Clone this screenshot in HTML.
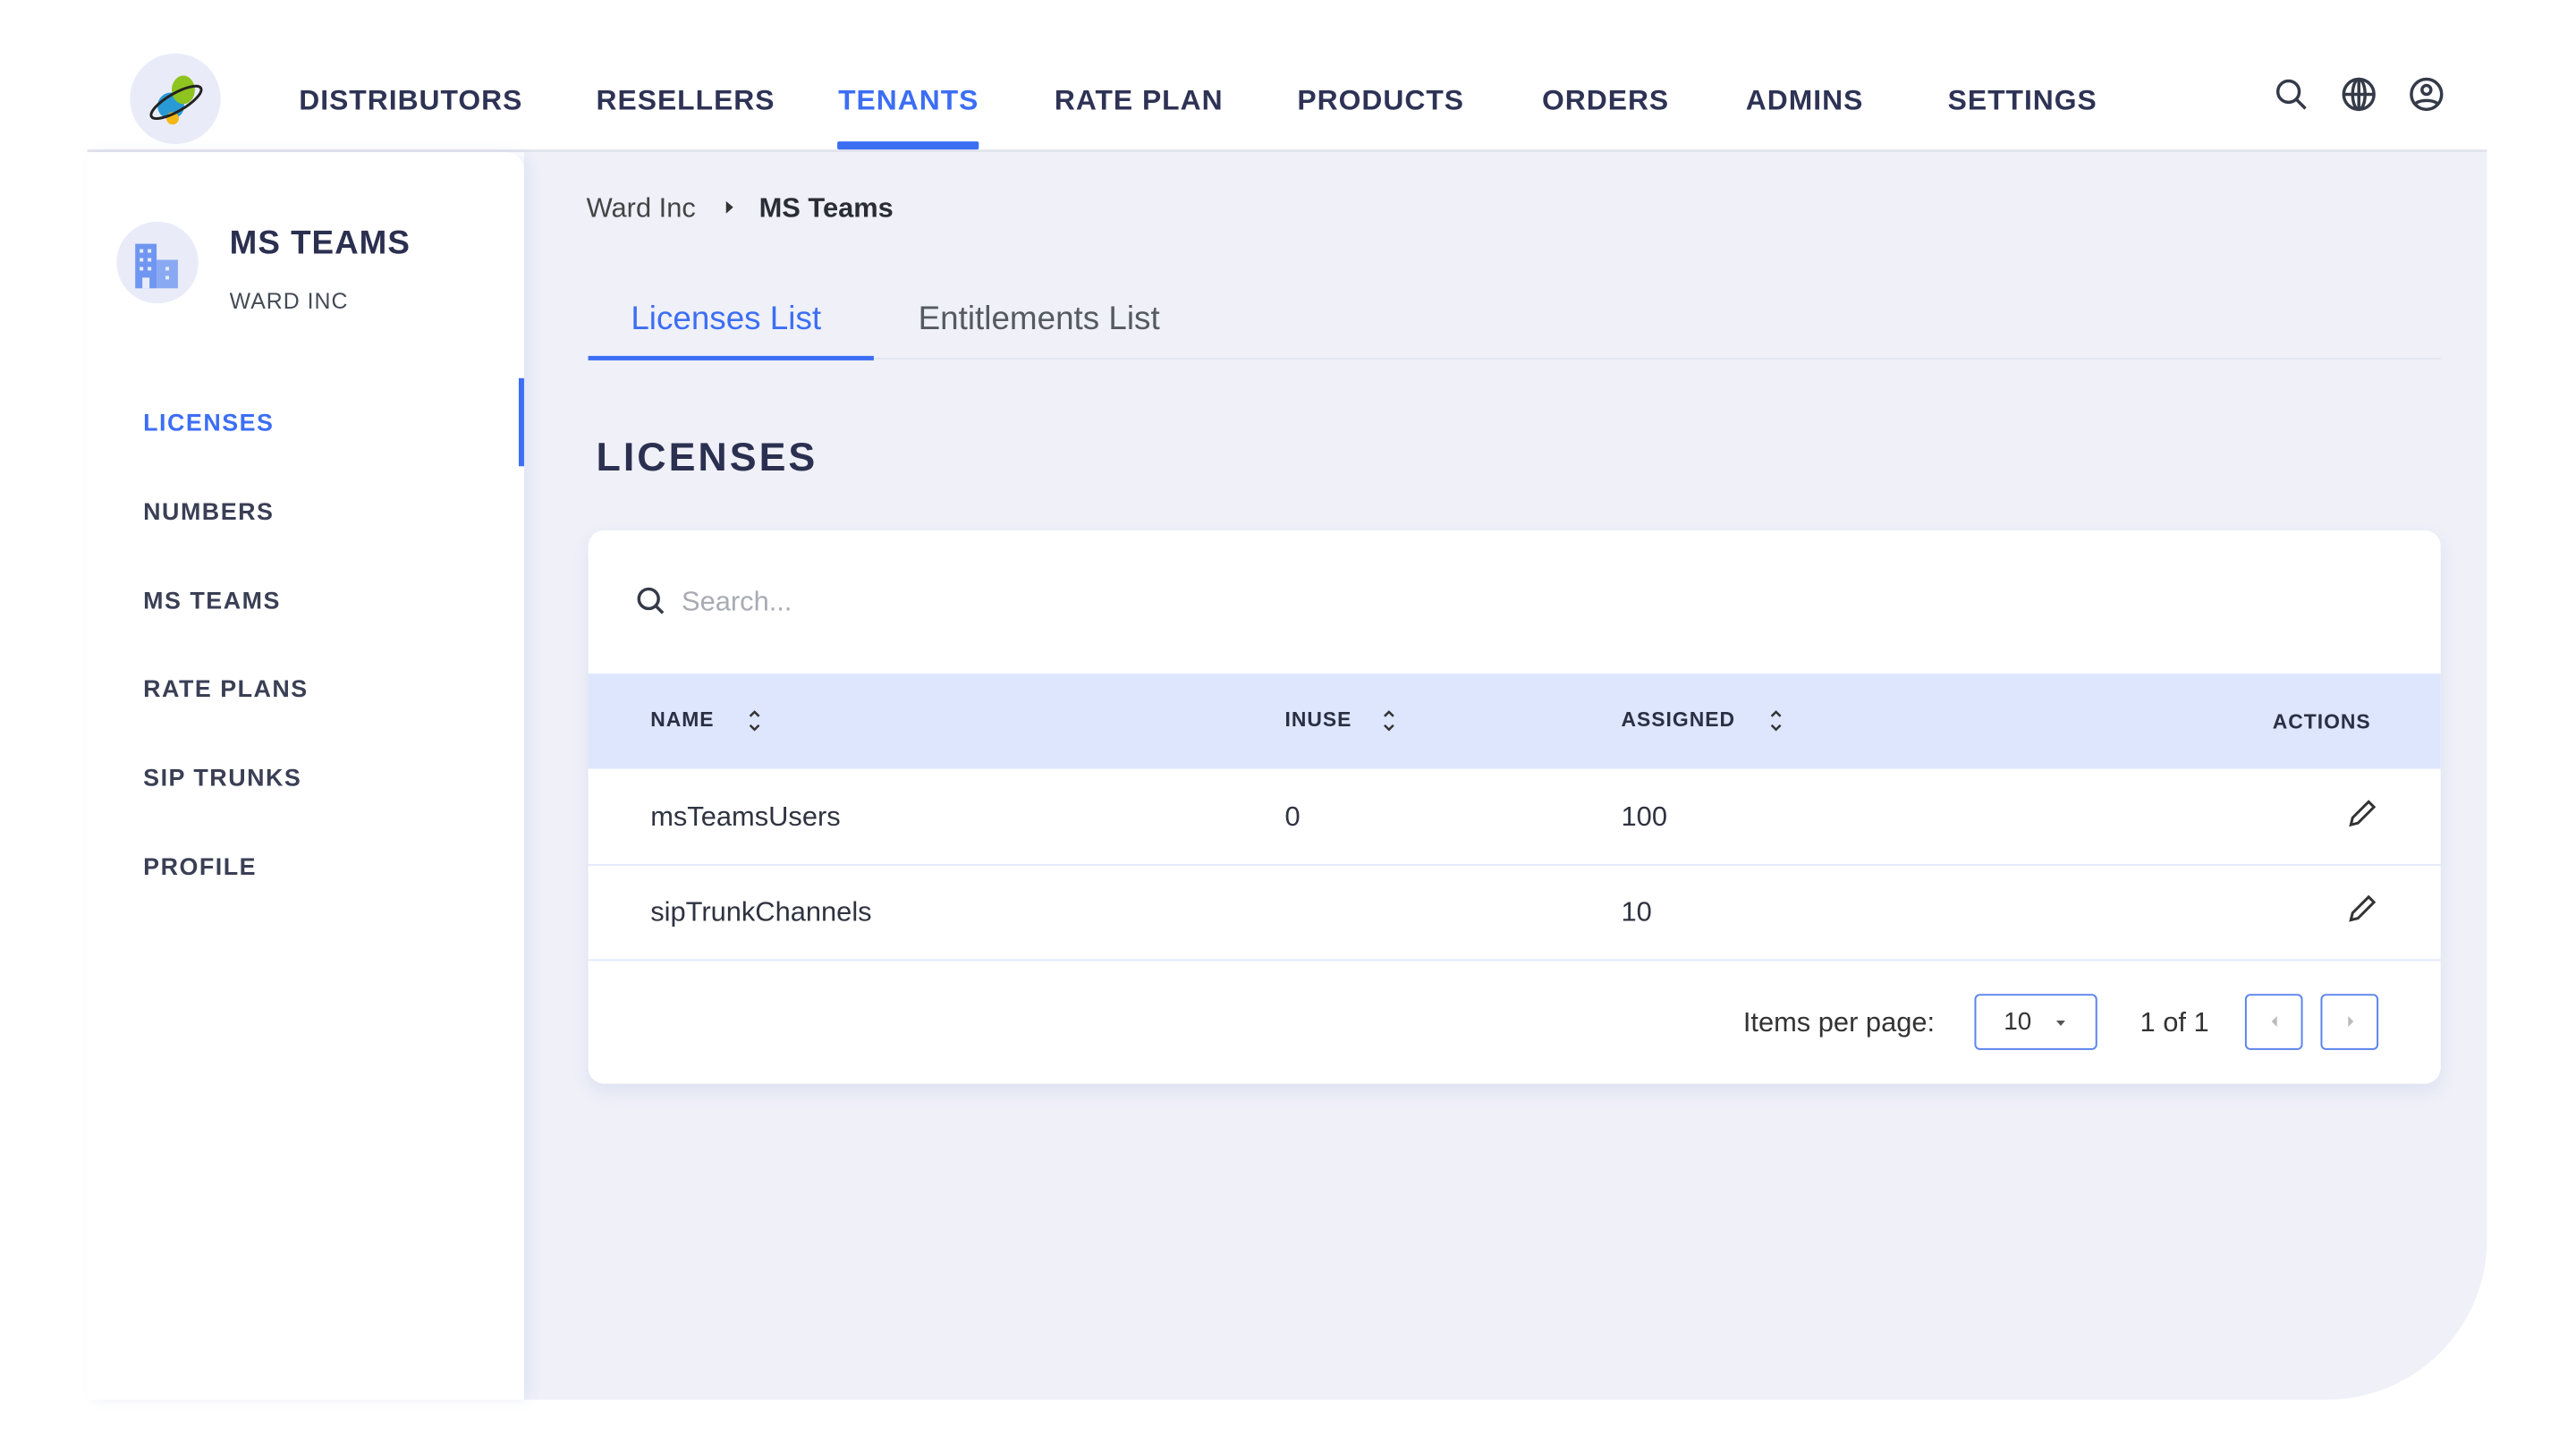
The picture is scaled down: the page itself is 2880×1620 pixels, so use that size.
<!DOCTYPE html>
<html><head><meta charset="utf-8"><style>
*{margin:0;padding:0;box-sizing:border-box}
body{width:2880px;height:1620px;background:#fff;font-family:"Liberation Sans",sans-serif;position:relative;overflow:hidden;color:#2b3050}
#w{position:absolute;left:0;top:0;width:2880px;height:1620px;transform:scale(0.9948);transform-origin:0 0}
.a{position:absolute;white-space:nowrap}
.nav{top:94px;font-size:32px;font-weight:bold;letter-spacing:1px;color:#2e3355}
.side{left:161px;font-size:27px;font-weight:bold;letter-spacing:1.5px;color:#3a3f55}
.th{top:795px;font-size:23px;font-weight:bold;letter-spacing:1px;color:#2a2f45}
.td{font-size:31px;color:#2f3340}
</style></head><body><div id="w">
<div class="a" style="left:98px;top:168px;width:2697px;height:3px;background:#e1e4ec"></div>
<div class="a" style="left:589px;top:171px;width:2206px;height:1402px;background:#eff0f8;border-bottom-right-radius:180px"></div>
<div class="a" style="left:98px;top:171px;width:491px;height:1402px;background:#fff;border-top-right-radius:20px;box-shadow:6px 0 14px rgba(120,140,220,.12)"></div>
<div class="a" style="left:146px;top:60px;width:102px;height:102px;border-radius:50%;background:#e9ecf8"></div>
<svg class="a" style="left:160px;top:75px" width="76" height="76" viewBox="0 0 76 76">
<circle cx="32" cy="44" r="15" fill="#2a9ad6"/><ellipse cx="46" cy="26" rx="13" ry="16" fill="#8fc31f"/>
<circle cx="34" cy="58" r="7" fill="#f5b715"/>
<ellipse cx="38" cy="40" rx="32" ry="10" fill="none" stroke="#222" stroke-width="3" transform="rotate(-30 38 40)"/>
</svg>
<div class="a nav" style="left:336px">DISTRIBUTORS</div>
<div class="a nav" style="left:670px">RESELLERS</div>
<div class="a nav" style="left:942px;color:#3c6ef4">TENANTS</div>
<div class="a" style="left:941px;top:159px;width:159px;height:9px;background:#3c6ef4;border-radius:2px"></div>
<div class="a nav" style="left:1185px">RATE PLAN</div>
<div class="a nav" style="left:1458px">PRODUCTS</div>
<div class="a nav" style="left:1733px">ORDERS</div>
<div class="a nav" style="left:1962px">ADMINS</div>
<div class="a nav" style="left:2189px">SETTINGS</div>
<svg class="a" style="left:2555px;top:85px" width="200" height="44" viewBox="0 0 200 44" fill="none" stroke="#343a48" stroke-width="3.5">
<circle cx="17" cy="18" r="12"/><path d="M26 27l10 10"/>
<circle cx="96" cy="21" r="17"/><path d="M79 21h34M96 4v34"/><ellipse cx="96" cy="21" rx="7" ry="17"/>
<circle cx="172" cy="21" r="17"/><circle cx="172" cy="16" r="5"/><path d="M160 31c6-4 18-4 24 0"/>
</svg>
<div class="a" style="left:131px;top:249px;width:92px;height:92px;border-radius:50%;background:#e9ecf8"></div>
<svg class="a" style="left:150px;top:270px" width="54" height="56" viewBox="0 0 54 56" fill="#6f96f0">
<rect x="2" y="4" width="24" height="50"/><rect x="26" y="22" width="24" height="32" fill="#8aa9f3"/>
<g fill="#e9ecf8"><rect x="7" y="10" width="4" height="4"/><rect x="16" y="10" width="4" height="4"/><rect x="7" y="20" width="4" height="4"/><rect x="16" y="20" width="4" height="4"/><rect x="7" y="30" width="4" height="4"/><rect x="16" y="30" width="4" height="4"/><rect x="10" y="42" width="8" height="12"/><rect x="36" y="30" width="4" height="4"/><rect x="36" y="40" width="4" height="4"/></g>
</svg>
<div class="a" style="left:258px;top:252px;font-size:37px;font-weight:bold;letter-spacing:1px;color:#2b3050">MS TEAMS</div>
<div class="a" style="left:258px;top:325px;font-size:25px;letter-spacing:1px;color:#444a55">WARD INC</div>
<div class="a" style="left:583px;top:425px;width:6px;height:99px;background:#3c6ef4"></div>
<div class="a side" style="top:460px;color:#3c6ef4">LICENSES</div>
<div class="a side" style="top:560px">NUMBERS</div>
<div class="a side" style="top:660px">MS TEAMS</div>
<div class="a side" style="top:759px">RATE PLANS</div>
<div class="a side" style="top:859px">SIP TRUNKS</div>
<div class="a side" style="top:959px">PROFILE</div>
<div class="a" style="left:659px;top:216px;font-size:31px;color:#444">Ward Inc</div>
<div class="a" style="left:816px;top:226px;width:0;height:0;border-left:8px solid #333;border-top:7px solid transparent;border-bottom:7px solid transparent"></div>
<div class="a" style="left:853px;top:216px;font-size:31px;font-weight:bold;color:#2a2d35">MS Teams</div>
<div class="a" style="left:709px;top:337px;font-size:37px;color:#3c6ef4">Licenses List</div>
<div class="a" style="left:1032px;top:337px;font-size:37px;color:#555a62">Entitlements List</div>
<div class="a" style="left:661px;top:402px;width:2082px;height:2px;background:#e3e6f0"></div>
<div class="a" style="left:661px;top:400px;width:321px;height:5px;background:#3c6ef4"></div>
<div class="a" style="left:670px;top:488px;font-size:45px;font-weight:bold;letter-spacing:3px;color:#2b3050">LICENSES</div>
<div class="a" style="left:661px;top:596px;width:2082px;height:622px;background:#fff;border-radius:18px;box-shadow:0 8px 18px rgba(100,120,200,.12);overflow:hidden">
<div class="a" style="left:0;top:161px;width:2082px;height:107px;background:#dde6fc"></div>
<div class="a" style="left:0;top:375px;width:2082px;height:2px;background:#e4eafa"></div>
<div class="a" style="left:0;top:482px;width:2082px;height:2px;background:#e4eafa"></div>
</div>
<svg class="a" style="left:714px;top:658px" width="36" height="36" viewBox="0 0 36 36" fill="none" stroke="#343a48" stroke-width="3.5"><circle cx="15" cy="15" r="11"/><path d="M23 23l8 8"/></svg>
<div class="a" style="left:766px;top:658px;font-size:31px;color:#a8abb3">Search...</div>
<div class="a th" style="left:731px">NAME</div>
<div class="a th" style="left:1444px">INUSE</div>
<div class="a th" style="left:1822px">ASSIGNED</div>
<div class="a th" style="left:2554px;top:798px">ACTIONS</div>
<svg class="a" style="left:838px;top:795px" width="20" height="30" viewBox="0 0 20 30" fill="none" stroke="#333" stroke-width="2.5"><path d="M5 10l5-5 5 5M5 20l5 5 5-5"/></svg>
<svg class="a" style="left:1551px;top:795px" width="20" height="30" viewBox="0 0 20 30" fill="none" stroke="#333" stroke-width="2.5"><path d="M5 10l5-5 5 5M5 20l5 5 5-5"/></svg>
<svg class="a" style="left:1986px;top:795px" width="20" height="30" viewBox="0 0 20 30" fill="none" stroke="#333" stroke-width="2.5"><path d="M5 10l5-5 5 5M5 20l5 5 5-5"/></svg>
<div class="a td" style="left:731px;top:900px">msTeamsUsers</div>
<div class="a td" style="left:1444px;top:900px">0</div>
<div class="a td" style="left:1822px;top:900px">100</div>
<div class="a td" style="left:731px;top:1007px">sipTrunkChannels</div>
<div class="a td" style="left:1822px;top:1007px">10</div>
<svg class="a" style="left:2634px;top:895px" width="40" height="40" viewBox="0 0 40 40" fill="none" stroke="#333" stroke-width="3"><path d="M8 32l2-8L28 6l6 6-18 18z"/></svg>
<svg class="a" style="left:2634px;top:1002px" width="40" height="40" viewBox="0 0 40 40" fill="none" stroke="#333" stroke-width="3"><path d="M8 32l2-8L28 6l6 6-18 18z"/></svg>
<div class="a" style="left:1959px;top:1131px;font-size:31px;color:#333">Items per page:</div>
<div class="a" style="left:2219px;top:1117px;width:138px;height:63px;border:2px solid #5b84f0;border-radius:6px"></div>
<div class="a" style="left:2252px;top:1132px;font-size:28px;color:#333">10</div>
<div class="a" style="left:2311px;top:1147px;border-top:6px solid #555;border-left:5px solid transparent;border-right:5px solid transparent"></div>
<div class="a" style="left:2405px;top:1131px;font-size:31px;color:#333">1 of 1</div>
<div class="a" style="left:2523px;top:1117px;width:65px;height:63px;border:2px solid #5b84f0;border-radius:6px"></div>
<div class="a" style="left:2608px;top:1117px;width:65px;height:63px;border:2px solid #5b84f0;border-radius:6px"></div>
<div class="a" style="left:2553px;top:1142px;border-right:6px solid #bbb;border-top:6px solid transparent;border-bottom:6px solid transparent"></div>
<div class="a" style="left:2639px;top:1142px;border-left:6px solid #bbb;border-top:6px solid transparent;border-bottom:6px solid transparent"></div>
</div></body></html>
